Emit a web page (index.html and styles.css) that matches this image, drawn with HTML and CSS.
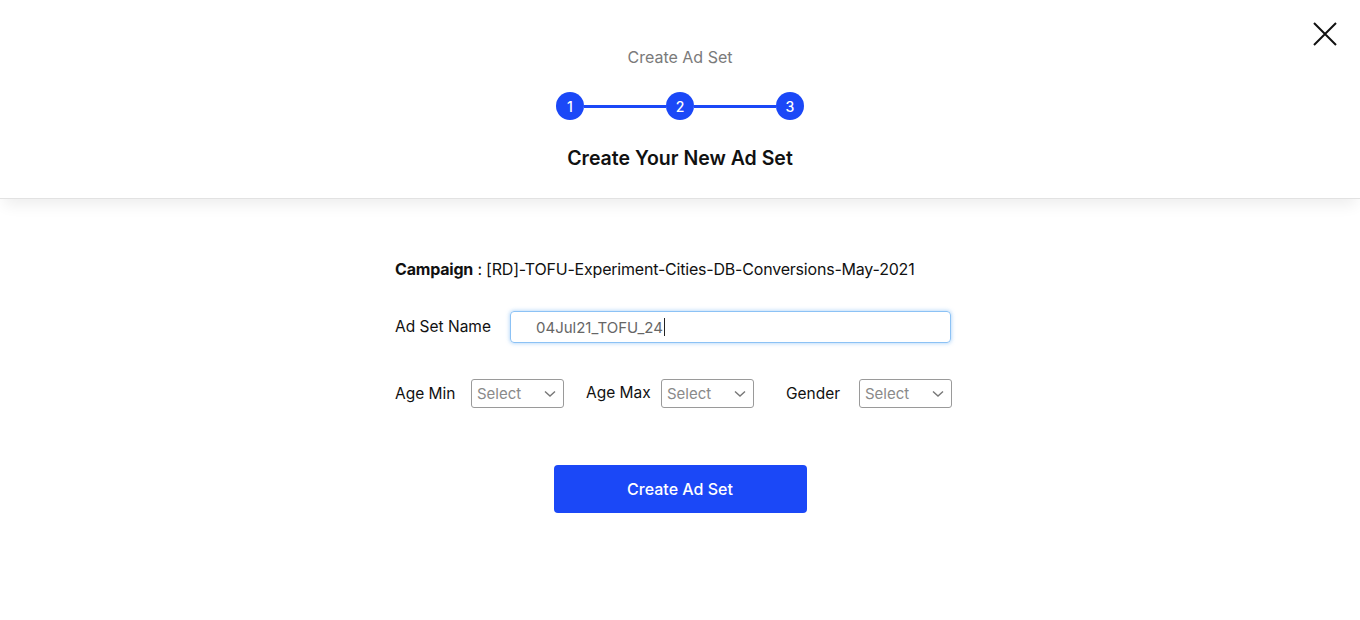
FILE: index.html
```html
<!DOCTYPE html>
<html>
<head>
<meta charset="utf-8">
<link rel="stylesheet" href="styles.css">
</head>
<body>
<header class="top">
  <button class="close" aria-label="Close">
    <svg width="26" height="26" viewBox="0 0 26 26"><path d="M2 2 L24 24 M24 2 L2 24" stroke="#111" stroke-width="2" fill="none"/></svg>
  </button>
  <div class="subtitle">Create Ad Set</div>
  <div class="steps">
    <span class="step">1</span>
    <span class="bar"></span>
    <span class="step">2</span>
    <span class="bar"></span>
    <span class="step">3</span>
  </div>
  <h1 class="title">Create Your New Ad Set</h1>
</header>
<main class="form">
  <div class="campaign"><b>Campaign</b> : [RD]-TOFU-Experiment-Cities-DB-Conversions-May-2021</div>
  <div class="name-row">
    <label class="name-label">Ad Set Name</label>
    <div class="name-input">04Jul21_TOFU_24<span class="caret"></span></div>
  </div>
  <div class="sel-row">
    <span class="lbl l1">Age Min</span>
    <div class="sel"><span>Select</span><svg width="12" height="8" viewBox="0 0 12 8"><path d="M1 1.5 L6 6 L11 1.5" stroke="#777" stroke-width="1.4" fill="none"/></svg></div>
    <span class="lbl l2">Age Max</span>
    <div class="sel"><span>Select</span><svg width="12" height="8" viewBox="0 0 12 8"><path d="M1 1.5 L6 6 L11 1.5" stroke="#777" stroke-width="1.4" fill="none"/></svg></div>
    <span class="lbl l3">Gender</span>
    <div class="sel"><span>Select</span><svg width="12" height="8" viewBox="0 0 12 8"><path d="M1 1.5 L6 6 L11 1.5" stroke="#777" stroke-width="1.4" fill="none"/></svg></div>
  </div>
  <div class="btn-row"><button class="create">Create Ad Set</button></div>
</main>
</body>
</html>
```
FILE: styles.css
```css
* { box-sizing: border-box; }
html, body { margin: 0; padding: 0; background: #fff; }
body { font-family: Inter, "Noto Sans", sans-serif; color: #111; width: 1360px; height: 620px; overflow: hidden; }

.top {
  position: relative;
  height: 199px;
  border-bottom: 1px solid #e2e2e2;
  box-shadow: 0 10px 14px -4px rgba(0,0,0,0.07);
  display: flex;
  flex-direction: column;
  align-items: center;
  padding-top: 47px;
  background: #fff;
  z-index: 1;
}
.close {
  position: absolute;
  right: 22px;
  top: 21px;
  border: 0;
  background: none;
  padding: 0;
  width: 26px;
  height: 26px;
}
.close svg { display: block; }
.subtitle { font-size: 16px; line-height: 20px; color: #7a7a7a; }
.steps { display: flex; align-items: center; margin-top: 25px; }
.step {
  width: 28px; height: 28px; border-radius: 50%;
  background: #1b48f7; color: #fff;
  display: flex; align-items: center; justify-content: center;
  font-size: 14px; font-weight: 500;
}
.bar { width: 82px; height: 3px; background: #1b48f7; }
.title { margin: 26px 0 0; font-size: 19.5px; line-height: 24px; font-weight: 600; color: #111; }

.form { width: 570px; margin: 0 auto; padding-top: 60px; font-size: 15.5px; }
.campaign { line-height: 20px; color: #111; font-size: 16px; letter-spacing: -0.2px; }
.campaign b { font-weight: 700; }
.name-row { display: flex; align-items: center; margin-top: 32px; }
.name-label { width: 115px; line-height: 20px; }
.name-input {
  width: 441px; height: 32px;
  border: 1px solid #8cc2f5; border-radius: 4px;
  box-shadow: 0 0 4px rgba(80,160,240,0.55);
  padding-left: 25px; color: #666; font-size: 15px;
  display: flex; align-items: center;
}
.caret { display: inline-block; width: 1px; height: 18px; background: #222; margin-left: 1px; }
.sel-row { display: flex; align-items: center; margin-top: 36px; }
.lbl { line-height: 20px; }
.l1 { width: 76px; margin-top: 1px; }
.l2 { width: 75px; margin-left: 22px; margin-top: -1px; }
.l3 { width: 73px; margin-left: 32px; margin-top: 1px; }
.sel {
  width: 93px; height: 29px;
  border: 1px solid #9a9a9a; border-radius: 3px;
  display: flex; align-items: center; justify-content: space-between;
  padding: 0 7px 0 5px; color: #8a8a8a; font-size: 15px;
}
.sel svg { display: block; }
.btn-row { display: flex; justify-content: center; margin-top: 57px; }
.create {
  width: 253px; height: 48px;
  border: 0; border-radius: 4px;
  background: #1b48f7; color: #fff;
  font-family: Inter, sans-serif; font-size: 16px; font-weight: 500;
}
```
